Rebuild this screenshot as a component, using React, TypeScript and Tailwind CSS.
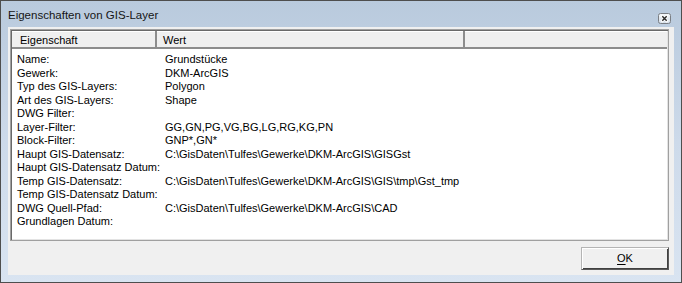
import React from "react";

const rows: [string, string][] = [
  ["Name:", "Grundstücke"],
  ["Gewerk:", "DKM-ArcGIS"],
  ["Typ des GIS-Layers:", "Polygon"],
  ["Art des GIS-Layers:", "Shape"],
  ["DWG Filter:", ""],
  ["Layer-Filter:", "GG,GN,PG,VG,BG,LG,RG,KG,PN"],
  ["Block-Filter:", "GNP*,GN*"],
  ["Haupt GIS-Datensatz:", "C:\\GisDaten\\Tulfes\\Gewerke\\DKM-ArcGIS\\GISGst"],
  ["Haupt GIS-Datensatz Datum:", ""],
  ["Temp GIS-Datensatz:", "C:\\GisDaten\\Tulfes\\Gewerke\\DKM-ArcGIS\\GIS\\tmp\\Gst_tmp"],
  ["Temp GIS-Datensatz Datum:", ""],
  ["DWG Quell-Pfad:", "C:\\GisDaten\\Tulfes\\Gewerke\\DKM-ArcGIS\\CAD"],
  ["Grundlagen Datum:", ""],
];

function CloseIcon() {
  return (
    <svg width="13" height="11" viewBox="0 0 13 11">
      <defs>
        <linearGradient id="cg" x1="0" y1="0" x2="0" y2="1">
          <stop offset="0" stopColor="#f4f7fa" />
          <stop offset="1" stopColor="#d3dde8" />
        </linearGradient>
      </defs>
      <rect x="0.5" y="0.5" width="12" height="10" rx="2" fill="url(#cg)" stroke="#7a7e84" />
      <path d="M4.3 3.2 L8.7 7.8 M8.7 3.2 L4.3 7.8" stroke="#ffffff" strokeWidth="2.8" strokeLinecap="square" />
      <path d="M4.3 3.2 L8.7 7.8 M8.7 3.2 L4.3 7.8" stroke="#2a2a2a" strokeWidth="1.4" />
    </svg>
  );
}

export default function App() {
  return (
    <div
      className="w-[682px] h-[283px] border border-[#4e4e4e] bg-gradient-to-b from-[#b9cadd] via-[#cddaea] to-[#d9e4f1] flex flex-col"
      style={{ fontFamily: '"Liberation Sans", Arial, sans-serif' }}
    >
      <div className="h-[26px] flex items-center justify-between pl-[7px] pr-[10px] pt-[3px]">
        <span className="text-[11.5px] text-[#151515] leading-none">Eigenschaften von GIS-Layer</span>
        <div className="mt-[5px]">
          <CloseIcon />
        </div>
      </div>
      <div className="flex-1 mx-[7px] mb-[7px] bg-[#f0f0f0] flex flex-col pl-[2px] pt-[2px] pr-[5px] pb-[4px]">
        <div className="h-[212px] border border-[#a0a0a0] shadow-[inset_1px_1px_0_#696969,inset_-1px_-1px_0_#e3e3e3] bg-white p-[1px] flex flex-col text-[11px] text-black">
          <div className="h-[18px] flex bg-[#efefef] border-b-2 border-[#8c8c8c] shadow-[inset_0_1px_0_#ffffff]">
            <div className="w-[145px] pl-[8px] pt-[3px] border-r-2 border-[#8c8c8c] leading-[13px]">Eigenschaft</div>
            <div className="w-[308px] pl-[6px] pt-[3px] border-r-2 border-[#8c8c8c] leading-[13px]">Wert</div>
            <div className="flex-1" />
          </div>
          <div className="flex flex-col pt-[4px]">
            {rows.map(([k, v], i) => (
              <div key={i} className="flex h-[13.5px] leading-[13px]">
                <div className="w-[153px] pl-[5px] whitespace-nowrap">{k}</div>
                <div className="whitespace-nowrap">{v}</div>
              </div>
            ))}
          </div>
        </div>
        <div className="flex justify-end mt-[6px]">
          <button className="w-[88px] h-[23px] bg-[#f0f0f0] border border-[#5a5a5a] border-t-[#b4b4b4] border-l-[#b4b4b4] shadow-[inset_1px_1px_0_#ffffff,inset_-1px_-1px_0_#404040] text-[11px] text-black flex items-center justify-center">
            <span>
              <span className="underline underline-offset-2">O</span>K
            </span>
          </button>
        </div>
      </div>
    </div>
  );
}
